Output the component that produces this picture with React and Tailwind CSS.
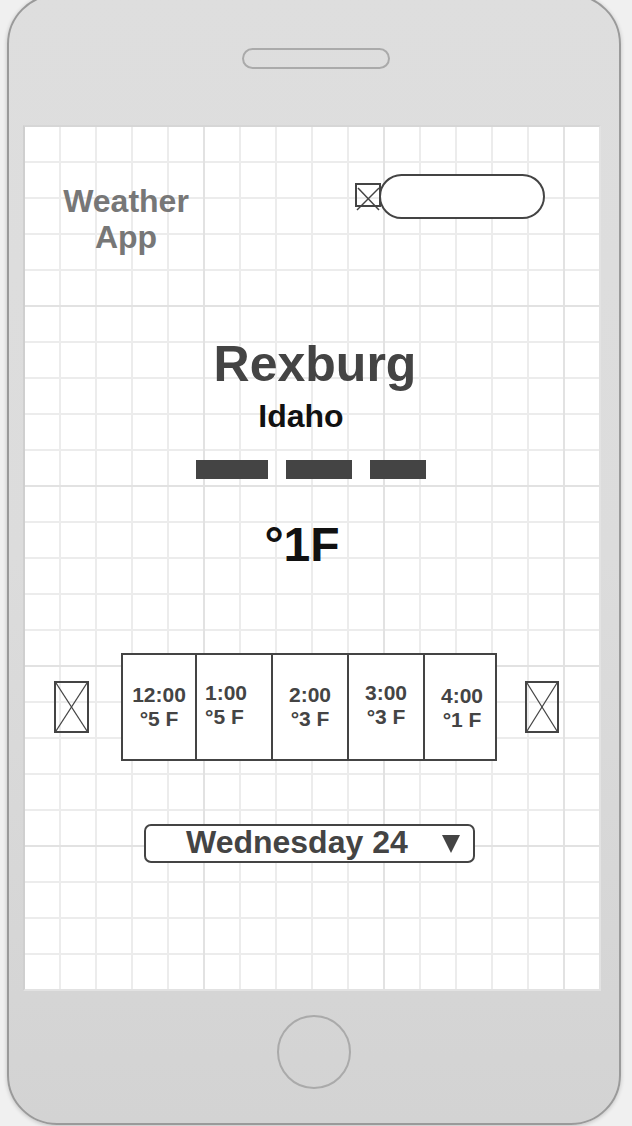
import React from 'react';

const hours = [
  { time: '12:00', temp: '°5 F', cls: 'w-[72px] items-center pt-[28px]' },
  { time: '1:00', temp: '°5 F', cls: 'w-[76px] border-l-2 border-[#444] items-start pl-[8px] pt-[26px]' },
  { time: '2:00', temp: '°3 F', cls: 'w-[76px] border-l-2 border-[#444] items-center pt-[28px]' },
  { time: '3:00', temp: '°3 F', cls: 'w-[76px] border-l-2 border-[#444] items-center pt-[26px]' },
  { time: '4:00', temp: '°1 F', cls: 'flex-1 border-l-2 border-[#444] items-center pl-[4px] pt-[29px]' }
];

// Crossed box = wireframe image placeholder
function Placeholder({ w, h }) {
  return (
    <svg width={w} height={h} viewBox={`0 0 ${w} ${h}`} className="shrink-0">
      <rect x="1" y="1" width={w - 2} height={h - 2} fill="none" stroke="#444" strokeWidth="2" />
      <line x1="2" y1="2" x2={w - 2} y2={h - 2} stroke="#444" strokeWidth="1.3" />
      <line x1={w - 2} y1="2" x2="2" y2={h - 2} stroke="#444" strokeWidth="1.3" />
    </svg>
  );
}

export default function App() {
  return (
    <div className="w-[632px] h-[1126px] overflow-hidden bg-[#f0f0f0] font-['Liberation_Sans',Arial,sans-serif] font-bold">
      {/* Phone body */}
      <div className="-mt-[6px] ml-[7px] w-[614px] h-[1131px] rounded-[50px] border-2 border-[#9a9a9a] bg-gradient-to-b from-[#dedede] via-[#dcdcdc] to-[#d3d3d3] shadow-[0_1px_4px_rgba(0,0,0,0.2)] flex flex-col">
        <div className="mt-[52px] ml-[233px] w-[148px] h-[21px] rounded-[11px] border-2 border-[#aaaaaa]" />

        {/* Screen */}
        <div className="mt-[56px] ml-[14px] w-[578px] h-[866px] border-2 border-[#e2e2e2] border-l-[#cfcfcf] border-t-[#d6d6d6] bg-white bg-origin-border bg-[linear-gradient(to_right,#e2e2e2_2px,transparent_2px),linear-gradient(to_bottom,#e2e2e2_2px,transparent_2px),linear-gradient(to_right,#ececec_2px,transparent_2px),linear-gradient(to_bottom,#ececec_2px,transparent_2px)] bg-size-[180px_180px,180px_180px,36px_36px,36px_36px] flex flex-col">
          {/* Header */}
          <div className="flex items-start">
            <div className="mt-[56px] w-[202px] text-center text-[32px] leading-[36px] text-[#777777]">
              Weather
              <br />
              App
            </div>
            <div className="mt-[47px] ml-[128px] flex items-center">
              <svg width="26" height="28" viewBox="0 0 26 28" className="shrink-0 mt-[1px]">
                <rect x="1" y="1" width="24" height="22" fill="none" stroke="#444" strokeWidth="2" />
                <line x1="3" y1="5" x2="24" y2="27" stroke="#444" strokeWidth="1.5" />
                <line x1="24" y1="5" x2="2" y2="27" stroke="#444" strokeWidth="1.5" />
              </svg>
              <div className="-ml-[2px] w-[166px] h-[45px] rounded-full border-2 border-[#444] bg-white" />
            </div>
          </div>

          {/* City */}
          <div className="mt-[81px] pl-[6px] text-center text-[50px] leading-[56px] text-[#444444]">Rexburg</div>
          <div className="mt-[6px] pr-[22px] text-center text-[32px] leading-[36px] text-[#111111]">Idaho</div>

          <div className="mt-[26px] pr-[2px] flex justify-center gap-[18px]">
            <div className="w-[72px] h-[19px] bg-[#444444]" />
            <div className="w-[66px] h-[19px] bg-[#444444]" />
            <div className="w-[56px] h-[19px] bg-[#444444]" />
          </div>

          <div className="mt-[39px] pr-[20px] text-center text-[48px] leading-[54px] text-[#111111]">°1F</div>

          {/* Hourly strip */}
          <div className="mt-[81px] flex items-center">
            <div className="ml-[29px]">
              <Placeholder w={35} h={52} />
            </div>
            <div className="ml-[32px] w-[376px] h-[108px] border-2 border-[#444] bg-white flex">
              {hours.map(h => (
                <div key={h.time} className={`flex flex-col text-[21px] leading-[24px] text-[#444444] ${h.cls}`}>
                  <span>{h.time}</span>
                  <span>{h.temp}</span>
                </div>
              ))}
            </div>
            <div className="ml-[28px]">
              <Placeholder w={34} h={52} />
            </div>
          </div>

          {/* Day select */}
          <div className="mt-[63px] ml-[119px] w-[331px] h-[39px] rounded-[7px] border-2 border-[#444] bg-white flex items-start pl-[40px]">
            <span className="text-[32px] leading-[32px] text-[#444444]">Wednesday 24</span>
            <svg width="18" height="18" viewBox="0 0 18 18" className="ml-auto mr-[13px] mt-[9px]">
              <polygon points="0,0 18,0 9,18" fill="#444" />
            </svg>
          </div>
        </div>

        {/* Home button */}
        <div className="mt-[24px] ml-[268px] w-[74px] h-[74px] rounded-full border-2 border-[#aaaaaa]" />
      </div>
    </div>
  );
}
